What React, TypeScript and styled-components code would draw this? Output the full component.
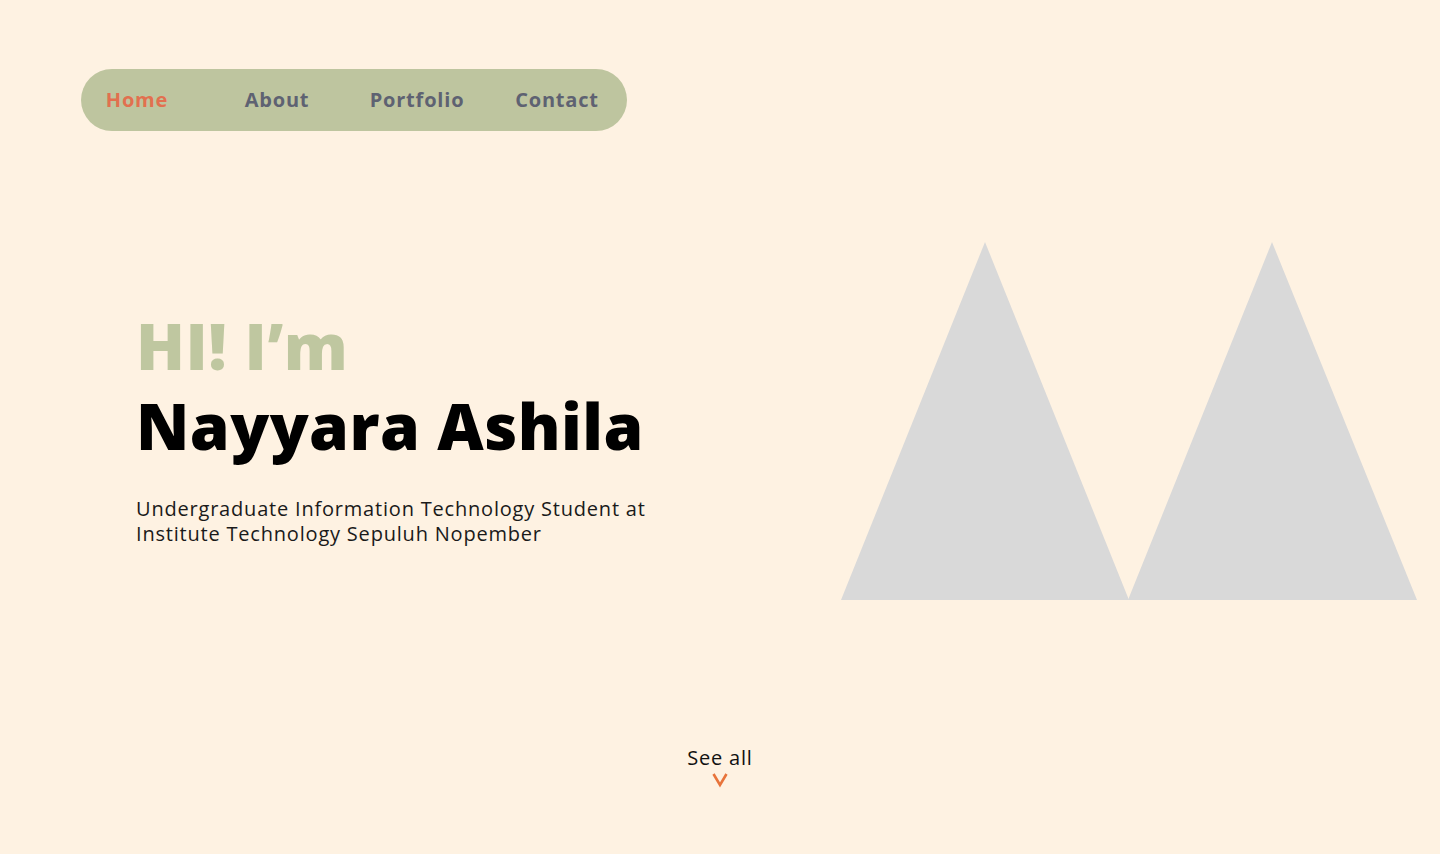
import React from "react";
import styled, { createGlobalStyle } from "styled-components";

const GlobalStyle = createGlobalStyle`
  * { box-sizing: border-box; }
  html, body { margin: 0; padding: 0; background: #fef2e2; }
  body { font-family: "Open Sans", "Liberation Sans", sans-serif; }
`;

const Page = styled.div`
  width: 1440px;
  height: 854px;
  background: #fef2e2;
  display: flex;
  flex-direction: column;
  overflow: hidden;
`;

const Header = styled.header`
  padding: 69px 0 0 81px;
`;

const Nav = styled.nav`
  width: 546px;
  height: 62px;
  border-radius: 31px;
  background: #bec59f;
  display: grid;
  grid-template-columns: repeat(4, 140px);
  justify-content: end;
  align-items: center;
`;

const NavLink = styled.a<{ $active?: boolean }>`
  justify-self: center;
  margin-top: -2px;
  font-family: "Open Sans", "Liberation Sans", sans-serif;
  font-weight: 700;
  font-size: 20px;
  letter-spacing: 0.8px;
  color: ${(p) => (p.$active ? "#e2704f" : "#5e6272")};
  text-decoration: none;
  cursor: pointer;
`;

const Hero = styled.section`
  display: flex;
  align-items: flex-start;
  padding: 111px 21px 0 136px;
`;

const Intro = styled.div`
  padding-top: 64px;
  display: flex;
  flex-direction: column;
`;

const Greeting = styled.h2`
  margin: 0;
  font-family: "Open Sans", "Liberation Sans", sans-serif;
  font-weight: 800;
  font-size: 64px;
  line-height: 80px;
  letter-spacing: 0.5px;
  color: #bfc7a0;
`;

const Name = styled.h1`
  margin: 0;
  font-family: "Open Sans", "Liberation Sans", sans-serif;
  font-weight: 800;
  font-size: 64px;
  line-height: 80px;
  letter-spacing: 0.45px;
  color: #000000;
`;

const Tagline = styled.p`
  margin: 30px 0 0;
  font-family: "Open Sans", "Liberation Sans", sans-serif;
  font-weight: 400;
  font-size: 20px;
  line-height: 25px;
  letter-spacing: 0.8px;
  color: #1a1a1a;
`;

const Art = styled.svg`
  margin-left: auto;
  display: block;
  flex-shrink: 0;
`;

const Footer = styled.div`
  margin-top: auto;
  padding-bottom: 66px;
  display: flex;
  flex-direction: column;
  align-items: center;
  gap: 2px;
`;

const SeeAll = styled.a`
  font-family: "Open Sans", "Liberation Sans", sans-serif;
  font-size: 20px;
  line-height: 24px;
  letter-spacing: 0.8px;
  color: #111111;
  text-decoration: none;
`;

const Chevron = styled.svg`
  display: block;
`;

export default function App() {
  return (
    <Page>
      <GlobalStyle />
      <Header>
        <Nav>
          <NavLink $active>Home</NavLink>
          <NavLink>About</NavLink>
          <NavLink>Portfolio</NavLink>
          <NavLink>Contact</NavLink>
        </Nav>
      </Header>
      <Hero>
        <Intro>
          <Greeting>HI! I’m</Greeting>
          <Name>Nayyara Ashila</Name>
          <Tagline>
            Undergraduate Information Technology Student at
            <br />
            Institute Technology Sepuluh Nopember
          </Tagline>
        </Intro>
        <Art width="578" height="358" viewBox="0 0 578 358">
          <polygon points="0,358 144,0 288,358" fill="#d9d9d9" />
          <polygon points="287,358 431,0 576,358" fill="#d9d9d9" />
        </Art>
      </Hero>
      <Footer>
        <SeeAll>See all</SeeAll>
        <Chevron width="16" height="16" viewBox="0 0 16 16">
          <polyline points="1.5,2 8,13 14.5,2" fill="none" stroke="#e8743b" strokeWidth="2.6" strokeLinejoin="miter" />
        </Chevron>
      </Footer>
    </Page>
  );
}
